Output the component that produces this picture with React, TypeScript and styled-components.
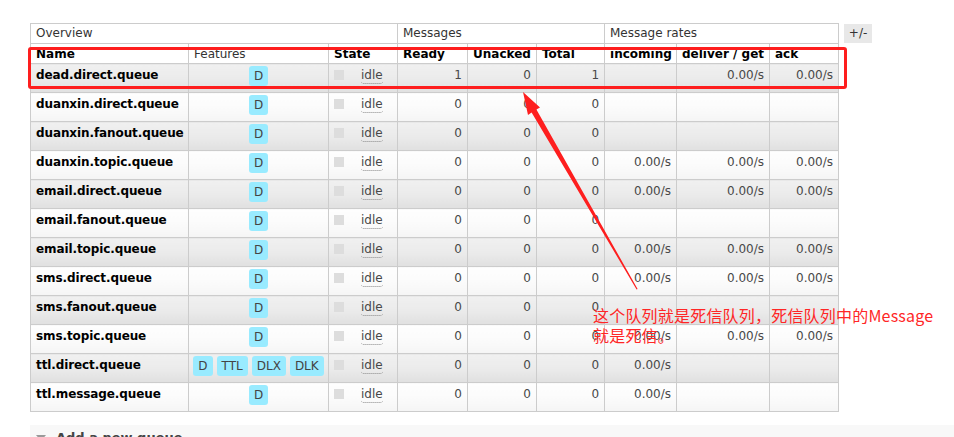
import styled, { createGlobalStyle } from 'styled-components';

const GlobalStyle = createGlobalStyle`
  html, body {
    margin: 0;
    padding: 0;
    background: #fff;
  }
  body {
    font-family: 'DejaVu Sans', Verdana, sans-serif;
    font-size: 12px;
    color: #484848;
  }
`;

const Page = styled.div`
  position: relative;
  width: 954px;
  height: 437px;
  overflow: hidden;
  box-sizing: border-box;
  padding: 23px 0 0 30px;
`;

const TableLine = styled.div`
  display: flex;
  align-items: flex-start;
  gap: 5px;
`;

const Table = styled.table`
  border-collapse: collapse;
  table-layout: fixed;
  width: 808px;
`;

const GroupCell = styled.th`
  box-sizing: border-box;
  height: 20px;
  padding: 2px 5px 0;
  border: 1px solid #ccc;
  background: #fff;
  font-weight: normal;
  text-align: left;
  vertical-align: top;
  color: #333;
`;

const HeadCell = styled.th<{ $light?: boolean }>`
  box-sizing: border-box;
  height: 20px;
  padding: 3px 5px 0;
  border: 1px solid #ccc;
  background: #fff;
  font-weight: ${(p) => (p.$light ? 'normal' : 'bold')};
  color: ${(p) => (p.$light ? '#333' : '#000')};
  text-align: left;
  vertical-align: top;
  white-space: nowrap;
  overflow: hidden;
`;

const Row = styled.tr<{ $alt: boolean }>`
  td {
    background: ${(p) =>
      p.$alt
        ? 'linear-gradient(#f0f0f0, #ebebeb 50%, #e0e0e0)'
        : 'linear-gradient(#fefefe, #fbfbfb 50%, #f5f5f5)'};
  }
`;

const Cell = styled.td<{ $align?: 'left' | 'center' | 'right' }>`
  box-sizing: border-box;
  height: 29px;
  padding: 4px 5px 0;
  border: 1px solid #ccc;
  vertical-align: top;
  text-align: ${(p) => p.$align ?? 'left'};
  white-space: nowrap;
`;

const QueueName = styled.span`
  font-weight: bold;
  color: #000;
  letter-spacing: -0.1px;
`;

const Badges = styled.div`
  display: flex;
  justify-content: center;
  gap: 4px;
  margin-top: -2px;
`;

const Badge = styled.span`
  display: inline-block;
  height: 20px;
  line-height: 21px;
  padding: 0 5px;
  border-radius: 3px;
  background: #99ebff;
  color: #444;
`;

const State = styled.div`
  display: flex;
  align-items: flex-start;
`;

const StateBox = styled.span`
  width: 10px;
  height: 10px;
  margin: 2px 17px 0 0;
  background: #ddd;
`;

const Idle = styled.span`
  color: #484848;
  padding-bottom: 1px;
  border-bottom: 1px dotted #888;
  border-radius: 0 0 3px 3px;
`;

const Toggle = styled.div`
  width: 28px;
  height: 19px;
  margin-top: 1px;
  background: #e8e8e8;
  color: #333;
  font-size: 12px;
  line-height: 19px;
  text-align: center;
`;

const AddSection = styled.div`
  display: flex;
  align-items: flex-start;
  gap: 10px;
  margin-top: 13px;
  height: 30px;
  padding: 0 0 0 6px;
  background: #f8f8f8;
`;

const Caret = styled.span`
  width: 0;
  height: 0;
  margin-top: 10px;
  border-left: 5px solid transparent;
  border-right: 5px solid transparent;
  border-top: 6px solid #999;
`;

const AddTitle = styled.span`
  margin-top: 5px;
  font-size: 13px;
  font-weight: bold;
  color: #444;
`;

const Highlight = styled.div`
  position: absolute;
  left: 28px;
  top: 47px;
  width: 819px;
  height: 42px;
  box-sizing: border-box;
  border: 3px solid #fe1e1e;
  border-radius: 3px;
`;

const Arrow = styled.svg`
  position: absolute;
  left: 0;
  top: 0;
  pointer-events: none;
`;

const Note = styled.div`
  position: absolute;
  left: 593px;
  top: 305px;
  font-family: 'Noto Sans CJK SC', 'Noto Sans', sans-serif;
  font-size: 16px;
  line-height: 20px;
  letter-spacing: 0.2px;
  color: #ff2626;
  white-space: nowrap;
`;

type Queue = {
  name: string;
  features: string[];
  ready: number;
  unacked: number;
  total: number;
  rates: [string, string, string];
};

const R = '0.00/s';

const queues: Queue[] = [
  { name: 'dead.direct.queue', features: ['D'], ready: 1, unacked: 0, total: 1, rates: ['', R, R] },
  { name: 'duanxin.direct.queue', features: ['D'], ready: 0, unacked: 0, total: 0, rates: ['', '', ''] },
  { name: 'duanxin.fanout.queue', features: ['D'], ready: 0, unacked: 0, total: 0, rates: ['', '', ''] },
  { name: 'duanxin.topic.queue', features: ['D'], ready: 0, unacked: 0, total: 0, rates: [R, R, R] },
  { name: 'email.direct.queue', features: ['D'], ready: 0, unacked: 0, total: 0, rates: [R, R, R] },
  { name: 'email.fanout.queue', features: ['D'], ready: 0, unacked: 0, total: 0, rates: ['', '', ''] },
  { name: 'email.topic.queue', features: ['D'], ready: 0, unacked: 0, total: 0, rates: [R, R, R] },
  { name: 'sms.direct.queue', features: ['D'], ready: 0, unacked: 0, total: 0, rates: [R, R, R] },
  { name: 'sms.fanout.queue', features: ['D'], ready: 0, unacked: 0, total: 0, rates: ['', '', ''] },
  { name: 'sms.topic.queue', features: ['D'], ready: 0, unacked: 0, total: 0, rates: [R, R, R] },
  { name: 'ttl.direct.queue', features: ['D', 'TTL', 'DLX', 'DLK'], ready: 0, unacked: 0, total: 0, rates: [R, '', ''] },
  { name: 'ttl.message.queue', features: ['D'], ready: 0, unacked: 0, total: 0, rates: [R, '', ''] },
];

const App = () => {
  return (
    <>
      <GlobalStyle />
      <Page>
        <TableLine>
          <Table>
            <colgroup>
              <col style={{ width: 158 }} />
              <col style={{ width: 140 }} />
              <col style={{ width: 69 }} />
              <col style={{ width: 70 }} />
              <col style={{ width: 69 }} />
              <col style={{ width: 68 }} />
              <col style={{ width: 72 }} />
              <col style={{ width: 93 }} />
              <col style={{ width: 69 }} />
            </colgroup>
            <thead>
              <tr>
                <GroupCell colSpan={3}>Overview</GroupCell>
                <GroupCell colSpan={3}>Messages</GroupCell>
                <GroupCell colSpan={3}>Message rates</GroupCell>
              </tr>
              <tr>
                <HeadCell>Name</HeadCell>
                <HeadCell $light>Features</HeadCell>
                <HeadCell>State</HeadCell>
                <HeadCell>Ready</HeadCell>
                <HeadCell>Unacked</HeadCell>
                <HeadCell>Total</HeadCell>
                <HeadCell>incoming</HeadCell>
                <HeadCell>deliver / get</HeadCell>
                <HeadCell>ack</HeadCell>
              </tr>
            </thead>
            <tbody>
              {queues.map((q, i) => (
                <Row key={q.name} $alt={i % 2 === 0}>
                  <Cell>
                    <QueueName>{q.name}</QueueName>
                  </Cell>
                  <Cell $align="center">
                    <Badges>
                      {q.features.map((f) => (
                        <Badge key={f}>{f}</Badge>
                      ))}
                    </Badges>
                  </Cell>
                  <Cell>
                    <State>
                      <StateBox />
                      <Idle>idle</Idle>
                    </State>
                  </Cell>
                  <Cell $align="right">{q.ready}</Cell>
                  <Cell $align="right">{q.unacked}</Cell>
                  <Cell $align="right">{q.total}</Cell>
                  <Cell $align="right">{q.rates[0]}</Cell>
                  <Cell $align="right">{q.rates[1]}</Cell>
                  <Cell $align="right">{q.rates[2]}</Cell>
                </Row>
              ))}
            </tbody>
          </Table>
          <Toggle>+/-</Toggle>
        </TableLine>
        <AddSection>
          <Caret />
          <AddTitle>Add a new queue</AddTitle>
        </AddSection>

        <Highlight />
        <Arrow width="954" height="437" viewBox="0 0 954 437">
          <polygon
            points="523,92 540,107.5 536.4,109.6 637.6,289 636.6,289.4 531.6,112.5 528,115"
            fill="#fe1e1e"
          />
        </Arrow>
        <Note>
          这个队列就是死信队列，死信队列中的Message
          <br />
          就是死信。
        </Note>
      </Page>
    </>
  );
};

export default App;
